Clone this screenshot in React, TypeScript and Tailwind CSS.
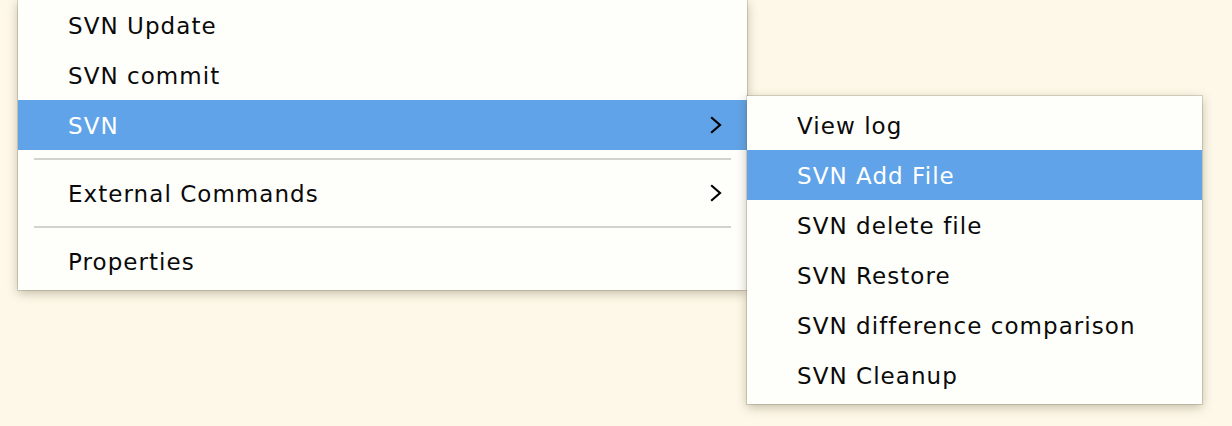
type Item =
  | { kind: "item"; label: string; active?: boolean; sub?: boolean }
  | { kind: "sep" };

const mainItems: Item[] = [
  { kind: "item", label: "SVN Update" },
  { kind: "item", label: "SVN commit" },
  { kind: "item", label: "SVN", active: true, sub: true },
  { kind: "sep" },
  { kind: "item", label: "External Commands", sub: true },
  { kind: "sep" },
  { kind: "item", label: "Properties" },
];

const subItems: Item[] = [
  { kind: "item", label: "View log" },
  { kind: "item", label: "SVN Add File", active: true },
  { kind: "item", label: "SVN delete file" },
  { kind: "item", label: "SVN Restore" },
  { kind: "item", label: "SVN difference comparison" },
  { kind: "item", label: "SVN Cleanup" },
];

function Chevron() {
  return (
    <svg width="12" height="18" viewBox="0 0 12 18" className="shrink-0">
      <polyline
        points="2,2 10,9 2,16"
        fill="none"
        stroke="#000"
        strokeWidth="2.2"
        strokeLinecap="square"
        strokeLinejoin="miter"
      />
    </svg>
  );
}

function MenuRows({ items }: { items: Item[] }) {
  return (
    <>
      {items.map((it, i) =>
        it.kind === "sep" ? (
          <div key={i} className="h-[18px] flex items-center px-4">
            <div className="h-[2px] w-full bg-[#d3d2cf]" />
          </div>
        ) : (
          <div
            key={i}
            className={`h-[50px] flex items-center justify-between pl-[50px] pr-[25px] ${
              it.active ? "bg-[#60a3e8] text-white" : "text-[#0a0a0a]"
            }`}
          >
            <span className="pt-[2px]">{it.label}</span>
            {it.sub && <Chevron />}
          </div>
        )
      )}
    </>
  );
}

export default function App() {
  return (
    <div
      className="relative w-[1232px] h-[426px] overflow-hidden bg-[#fdf8e8] text-[23px] tracking-[1.05px]"
      style={{ fontFamily: '"DejaVu Sans", "Liberation Sans", sans-serif' }}
    >
      <div className="relative ml-[18px] w-[729px] bg-[#fefefb] pb-1 shadow-[0_3px_10px_rgba(80,70,40,0.35),0_0_0_1px_rgba(120,115,100,0.25)]">
        <MenuRows items={mainItems} />
        <div className="absolute left-[729px] top-[96px] w-[455px] bg-[#fefefb] py-1 shadow-[0_3px_10px_rgba(80,70,40,0.35),0_0_0_1px_rgba(120,115,100,0.25)]">
          <MenuRows items={subItems} />
        </div>
      </div>
    </div>
  );
}
